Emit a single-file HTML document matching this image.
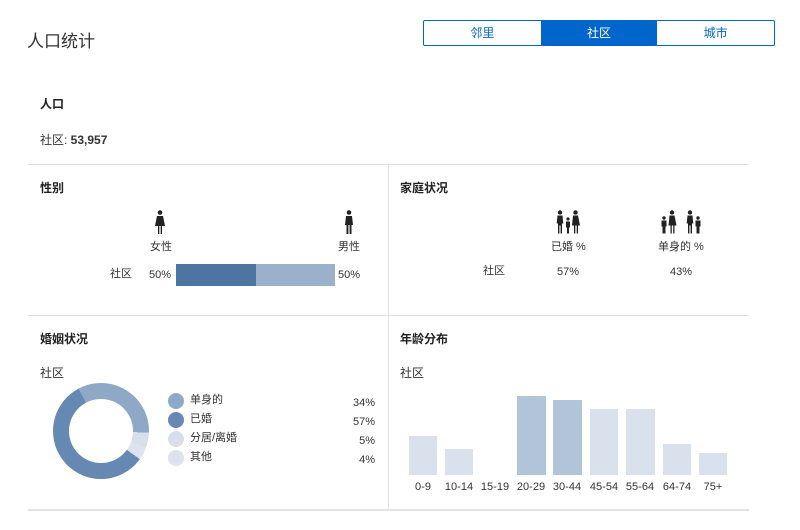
<!DOCTYPE html>
<html><head><meta charset="utf-8"><style>
*{margin:0;padding:0;box-sizing:border-box}
body{width:800px;height:530px;background:#fff;font-family:"Liberation Sans","Noto Sans CJK SC",sans-serif;color:#222;position:relative;overflow:hidden}
.a{position:absolute;white-space:nowrap;line-height:14px}
.b{font-weight:bold;font-size:12px;color:#222}
.s{font-size:11px;color:#333}
.hl{position:absolute;left:28px;width:721px;height:1px;background:#e2e2e2}
</style></head><body>
<div class="a" style="left:27px;top:32px;font-size:17px;line-height:20px;color:#333">人口统计</div>
<div class="a" style="left:423px;top:20px;width:352px;height:26px;border:1px solid #0066cc;border-radius:2px;display:flex;font-size:12px">
<div style="flex:1;color:#0066cc;text-align:center;line-height:24px">邻里</div>
<div style="flex:1;background:#0066cc;color:#fff;text-align:center;line-height:24px">社区</div>
<div style="flex:1;color:#0066cc;text-align:center;line-height:24px">城市</div>
</div>
<div class="a b" style="left:40px;top:97px">人口</div>
<div class="a s" style="left:40px;top:133px;font-size:12px">社区: <b>53,957</b></div>
<div class="hl" style="top:164px"></div>
<div class="hl" style="top:315px"></div>
<div class="hl" style="top:509px;height:2px"></div>
<div class="a" style="left:388px;top:165px;width:1px;height:345px;background:#e2e2e2"></div>

<div class="a b" style="left:40px;top:181px">性别</div>
<svg class="a" style="left:154px;top:210px" width="12" height="24" viewBox="0 0 12 24"><circle cx="6" cy="2.5" r="2.3" fill="#222"/><path d="M3 6h6l2 10H8v8H6.7v-8H5.3v8H4v-8H1z" fill="#222"/></svg>
<svg class="a" style="left:343px;top:210px" width="12" height="24" viewBox="0 0 12 24"><circle cx="6" cy="2.5" r="2.3" fill="#222"/><path d="M3 6h6l1 9H8.5v9H6.6v-9H5.4v9H3.5v-9H2z" fill="#222"/></svg>
<div class="a s" style="left:150px;top:240px">女性</div>
<div class="a s" style="left:338px;top:240px">男性</div>
<div class="a s" style="left:110px;top:267px">社区</div>
<div class="a s" style="left:149px;top:268px">50%</div>
<div class="a" style="left:176px;top:264px;width:80px;height:22px;background:#4e74a2"></div>
<div class="a" style="left:256px;top:264px;width:79px;height:22px;background:#9ab0cb"></div>
<div class="a s" style="left:338px;top:268px">50%</div>

<div class="a b" style="left:400px;top:181px">家庭状况</div>
<svg class="a" style="left:555px;top:210px" width="26" height="24" viewBox="0 0 26 24"><g fill="#222"><circle cx="5" cy="2.5" r="2.2"/><path d="M2.5 5.5h5l.8 8H7v10H5.6v-8H4.4v8H3v-10H1.7z"/><circle cx="13" cy="9" r="1.6"/><path d="M11 11.5h4v6h-1v6h-2v-6h-1z"/><circle cx="20.5" cy="2.5" r="2.2"/><path d="M18 5.5h5l2 10h-2v8h-1.3v-8h-1.4v8H19v-8h-2z"/></g></svg>
<svg class="a" style="left:660px;top:210px" width="44" height="24" viewBox="0 0 44 24"><g fill="#222"><circle cx="4" cy="8" r="1.7"/><path d="M1.5 10.5h5v6h-1v7H2.5v-7h-1z"/><circle cx="12" cy="2.5" r="2.2"/><path d="M9.5 5.5h5l2 10h-2v8h-1.3v-8h-1.4v8H10.5v-8h-2z"/><circle cx="30" cy="2.5" r="2.2"/><path d="M27.5 5.5h5l.8 8H32v10h-1.4v-8h-1.2v8H28v-10h-1.3z"/><circle cx="38" cy="8" r="1.7"/><path d="M35.5 10.5h5v6h-1v7h-3v-7h-1z"/></g></svg>
<div class="a s" style="left:551px;top:240px">已婚 %</div>
<div class="a s" style="left:658px;top:240px">单身的 %</div>
<div class="a s" style="left:483px;top:264px">社区</div>
<div class="a s" style="left:557px;top:265px">57%</div>
<div class="a s" style="left:670px;top:265px">43%</div>

<div class="a b" style="left:40px;top:332px">婚姻状况</div>
<div class="a s" style="left:40px;top:366px;font-size:12px">社区</div>
<div class="a" style="left:53px;top:383px;width:96px;height:96px;border-radius:50%;background:conic-gradient(#8ea8c6 -28deg,#8ea8c6 92deg,#d6dfea 92deg,#d6dfea 110deg,#dce3ec 110deg,#dce3ec 126deg,#6589b3 126deg,#6589b3 332deg,#8ea8c6 332deg)"></div>
<div class="a" style="left:69px;top:399px;width:64px;height:64px;border-radius:50%;background:#fff"></div>
<div class="a" style="left:168px;top:393px;width:16px;height:16px;border-radius:50%;background:#8ea8c6"></div>
<div class="a" style="left:168px;top:412px;width:16px;height:16px;border-radius:50%;background:#6589b3"></div>
<div class="a" style="left:168px;top:431px;width:16px;height:16px;border-radius:50%;background:#d6dfea"></div>
<div class="a" style="left:168px;top:450px;width:16px;height:16px;border-radius:50%;background:#dce3ec"></div>
<div class="a s" style="left:190px;top:393px">单身的</div>
<div class="a s" style="left:190px;top:412px">已婚</div>
<div class="a s" style="left:190px;top:431px">分居/离婚</div>
<div class="a s" style="left:190px;top:450px">其他</div>
<div class="a s" style="left:335px;top:396px;width:40px;text-align:right">34%</div>
<div class="a s" style="left:335px;top:415px;width:40px;text-align:right">57%</div>
<div class="a s" style="left:335px;top:434px;width:40px;text-align:right">5%</div>
<div class="a s" style="left:335px;top:453px;width:40px;text-align:right">4%</div>

<div class="a b" style="left:400px;top:332px">年龄分布</div>
<div class="a s" style="left:400px;top:366px;font-size:12px">社区</div>
<div class="a" style="left:409px;top:436px;width:28px;height:39px;background:#d8e1ec"></div>
<div class="a" style="left:445px;top:449px;width:28px;height:26px;background:#d8e1ec"></div>
<div class="a" style="left:517px;top:396px;width:29px;height:79px;background:#b1c4d9"></div>
<div class="a" style="left:553px;top:400px;width:29px;height:75px;background:#b1c4d9"></div>
<div class="a" style="left:590px;top:409px;width:28px;height:66px;background:#d8e1ec"></div>
<div class="a" style="left:626px;top:409px;width:29px;height:66px;background:#d8e1ec"></div>
<div class="a" style="left:663px;top:444px;width:28px;height:31px;background:#d8e1ec"></div>
<div class="a" style="left:699px;top:453px;width:28px;height:22px;background:#d8e1ec"></div>
<div class="a s" style="left:403px;top:480px;width:40px;text-align:center">0-9</div>
<div class="a s" style="left:439px;top:480px;width:40px;text-align:center">10-14</div>
<div class="a s" style="left:475px;top:480px;width:40px;text-align:center">15-19</div>
<div class="a s" style="left:511px;top:480px;width:40px;text-align:center">20-29</div>
<div class="a s" style="left:547px;top:480px;width:40px;text-align:center">30-44</div>
<div class="a s" style="left:584px;top:480px;width:40px;text-align:center">45-54</div>
<div class="a s" style="left:620px;top:480px;width:40px;text-align:center">55-64</div>
<div class="a s" style="left:657px;top:480px;width:40px;text-align:center">64-74</div>
<div class="a s" style="left:693px;top:480px;width:40px;text-align:center">75+</div>
</body></html>
